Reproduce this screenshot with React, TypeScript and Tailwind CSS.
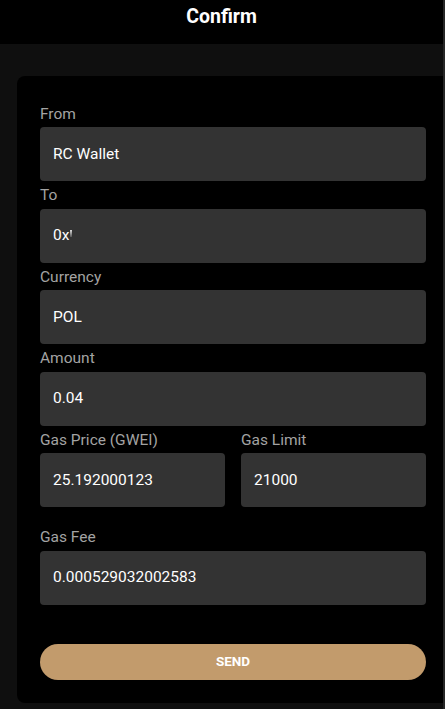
import React from "react";

function Field({ label, value, className = "" }: { label: string; value: React.ReactNode; className?: string }) {
  return (
    <div className={"flex flex-col " + className}>
      <label className="h-[27.5px] pt-[2px] flex items-center text-[15.5px] text-[#a3a3a3] leading-none">{label}</label>
      <div className="h-[54px] rounded-[4px] bg-[#333333] px-[13px] pt-[1px] flex items-center text-[15.5px] text-white">
        {value}
      </div>
    </div>
  );
}

export default function App() {
  return (
    <div
      className="w-[445px] h-[709px] overflow-hidden bg-[#0f0f0f] border-r-2 border-[#262626] flex flex-col"
      style={{ fontFamily: "Roboto, 'Liberation Sans', sans-serif" }}
    >
      {/* header */}
      <header className="h-[44px] shrink-0 bg-black flex items-center justify-center">
        <h1 className="text-[19.5px] font-bold text-white -mt-[11px]">Confirm</h1>
      </header>

      <main className="flex-1 pt-[32px] pb-[6px] pl-[17px]">
        <div className="h-full rounded-l-[8px] bg-black pt-[23.5px] pl-[23px] pr-[17px] flex flex-col">
          <Field label="From" value="RC Wallet" />
          <Field
            label="To"
            value={
              <span className="flex items-center">
                0x
                <span className="ml-[1px] -mt-[6px] h-[7px] w-[2px] bg-gradient-to-b from-[#dddddd] to-[#555555]" />
              </span>
            }
          />
          <Field label="Currency" value="POL" />
          <Field label="Amount" value="0.04" />
          <div className="flex gap-[16px]">
            <Field label="Gas Price (GWEI)" value="25.192000123" className="flex-1" />
            <Field label="Gas Limit" value="21000" className="flex-1" />
          </div>
          <Field label="Gas Fee" value="0.000529032002583" className="mt-[16px]" />
          <button className="mt-[39px] h-[36px] rounded-full bg-[#c29b6c] text-white text-[13.5px] font-bold">
            SEND
          </button>
        </div>
      </main>
    </div>
  );
}
